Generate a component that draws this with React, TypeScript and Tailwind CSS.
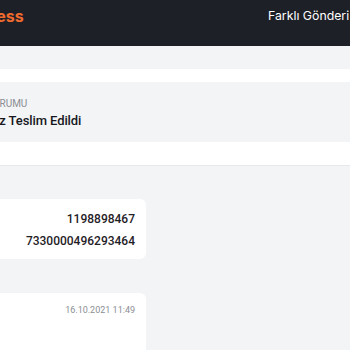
import React from "react";

export default function App() {
  return (
    <div
      className="w-[350px] h-[350px] overflow-hidden bg-[#f3f4f6]"
      style={{ fontFamily: "Roboto, 'Noto Sans', sans-serif" }}
    >
      <header className="h-[46px] bg-[#1e2028] flex justify-between items-start pt-[2px] font-[Inter,sans-serif]">
        <span className="ml-[-39px] text-[16px] font-bold text-[#ef6b2e] leading-[28px]">
          Express
        </span>
        <span className="ml-auto mr-[-47px] whitespace-nowrap text-[12.3px] text-white leading-[28px]">
          Farklı Gönderi Sorgula
        </span>
      </header>

      <div className="mt-[23px] bg-white border-b border-[#e7e8eb] pt-[13px] pb-[23px]">
        <div className="bg-[#f3f4f6] h-[60px] ml-[-120px] rounded-l-md pl-[64px] pt-[15px]">
          <div className="ml-[-2px] text-[10px] uppercase text-[#8a8d93] leading-[14px]">
            Gönderi Durumu
          </div>
          <div className="text-[13px] font-medium tracking-[-0.1px] text-[#16181d] leading-[20px]">
            Gönderiniz Teslim Edildi
          </div>
        </div>
      </div>

      <div className="w-[300px] ml-[-154px] mt-[33px] flex flex-col gap-[34px]">
        <div className="bg-white rounded-md h-[60px] pr-[11px] pt-[9px] flex flex-col items-end text-[12px] font-medium text-[#1f2126] leading-[22px]">
          <span>1198898467</span>
          <span>7330000496293464</span>
        </div>
        <div className="bg-white rounded-md h-[80px] pr-[11px] pt-[10px] flex flex-col items-end text-[9px] text-[#8b8e94] leading-[14px]">
          <span>16.10.2021 11:49</span>
        </div>
      </div>
    </div>
  );
}
